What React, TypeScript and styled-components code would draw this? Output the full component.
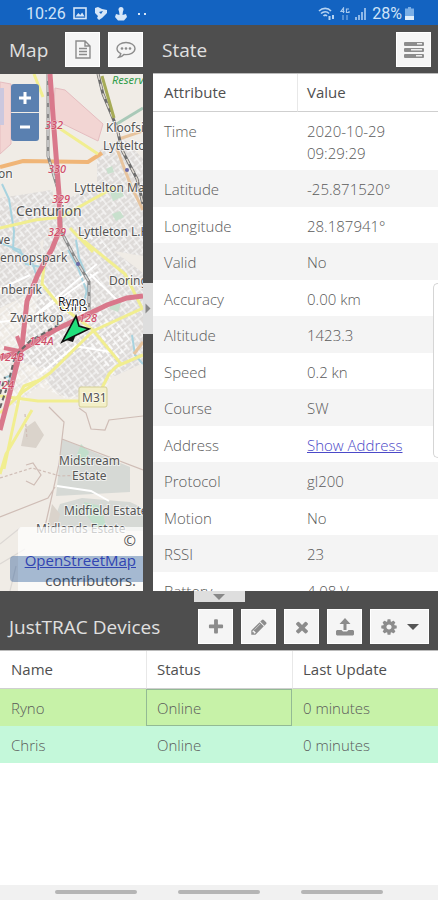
import React from "react";
import styled, { createGlobalStyle } from "styled-components";

const GlobalStyle = createGlobalStyle`
  * { box-sizing: border-box; }
  body { margin: 0; background: #fff; font-family: "Open Sans", "Noto Sans", sans-serif; font-size: 15px; }
`;

const Screen = styled.div`
  position: relative;
  display: flex;
  flex-direction: column;
  height: 100vh;
  overflow: hidden;
`;

const StatusBar = styled.header`
  flex: none;
  display: flex;
  align-items: center;
  justify-content: space-between;
  height: 25px;
  padding: 2px 24px 0 26px;
  background: #1363c1;
  color: #cfe3f8;
  font: 16px/24px Roboto, sans-serif;
`;

const StatusGroup = styled.div<{ $gap: number }>`
  display: flex;
  align-items: center;
  gap: ${(p) => p.$gap}px;
`;

const TopArea = styled.main`
  flex: 566 1 0;
  min-height: 0;
  display: flex;
`;

const Panel = styled.section<{ $grow: number }>`
  flex: ${(p) => p.$grow} 1 0;
  min-width: 0;
  min-height: 0;
  display: flex;
  flex-direction: column;
  overflow: hidden;
`;

const PanelHeader = styled.div<{ $right: number }>`
  flex: none;
  display: flex;
  align-items: center;
  gap: 8px;
  height: 48px;
  padding: 1px ${(p) => p.$right}px 0 9px;
  background: #4e4e4e;
`;

const PanelTitle = styled.h2`
  flex: 1;
  margin: 0;
  color: #e0e0e0;
  font-size: 19px;
  font-weight: 400;
  line-height: 24px;
  white-space: nowrap;
`;

const ToolButton = styled.button<{ $wide?: boolean }>`
  flex: none;
  display: flex;
  align-items: center;
  justify-content: center;
  gap: 9px;
  width: ${(p) => (p.$wide ? 59 : 35)}px;
  height: 35px;
  padding: 0;
  border: 1px solid #fff;
  background: #f5f5f5;
  color: #8c8c8c;
`;

const Splitter = styled.div<{ $horizontal?: boolean }>`
  flex: none;
  display: flex;
  flex-direction: ${(p) => (p.$horizontal ? "row" : "column")};
  justify-content: center;
  ${(p) => (p.$horizontal ? "height: 11px;" : "width: 10px;")}
  background: #4e4e4e;
`;

const Collapser = styled.button<{ $horizontal?: boolean }>`
  display: flex;
  align-items: center;
  justify-content: center;
  width: ${(p) => (p.$horizontal ? "51px" : "10px")};
  height: ${(p) => (p.$horizontal ? "11px" : "51px")};
  padding: 0;
  border: 0;
  background: #dedede;
  color: #888;
`;

const MapBody = styled.div`
  position: relative;
  flex: 1;
  min-height: 0;
  overflow: hidden;
  border-top: 1px solid #4e4e4e;
  background: #efebe5;
`;

const MapCanvas = styled.svg`
  display: block;
  width: 100%;
  height: 100%;
`;

const ZoomControl = styled.div`
  position: absolute;
  top: 10px;
  left: 11px;
  display: grid;
  gap: 1px;
`;

const ZoomButton = styled.button<{ $last?: boolean }>`
  display: flex;
  align-items: center;
  justify-content: center;
  width: 28px;
  height: 28px;
  padding: 0;
  border: 0;
  border-radius: ${(p) => (p.$last ? "0 0 3px 3px" : "3px 3px 0 0")};
  background: #5a80b0;
  color: #fff;
`;

const ScaleLine = styled.div`
  position: absolute;
  left: 10px;
  right: 0;
  bottom: 9px;
  height: 26px;
  border-radius: 4px 0 0 4px;
  background: rgba(0, 60, 136, 0.34);
`;

const Attribution = styled.div`
  position: absolute;
  right: 0;
  bottom: 0;
  width: 125px;
  padding: 3px 7px 1px 0;
  border-radius: 4px 0 0 0;
  background: rgba(255, 255, 255, 0.72);
  color: #555;
  line-height: 20px;
  display: flex;
  flex-direction: column;
  align-items: flex-end;
`;

const Link = styled.a`
  color: #4b49c8;
  text-decoration: underline;
`;

const TableArea = styled.div`
  flex: 1;
  min-height: 0;
  overflow: hidden;
  background: #fff;
  border-top: 1px solid #bbb;
`;

const Table = styled.table`
  width: 100%;
  table-layout: fixed;
  border-collapse: separate;
  border-spacing: 0;
  text-align: left;
  color: #5a5a5a;
  font-size: 15px;
  line-height: 22px;
`;

const HeadCell = styled.th<{ $pad: number; $narrow?: boolean }>`
  width: ${(p) => (p.$narrow ? "144px" : "auto")};
  height: 38px;
  padding: 0 ${(p) => p.$pad}px 1px;
  border-bottom: 1px solid #cfcfcf;
  color: #4f4f4f;
  font-weight: 400;
  & + & { border-left: 1px solid #e8e8e8; }
`;

const AttributeRow = styled.tr`
  height: 36px;
  &:nth-child(even) { height: 37px; background: #f4f4f4; }
`;

const Cell = styled.td<{ $pad: number }>`
  padding: 8px ${(p) => p.$pad}px 6px;
  font-weight: 300;
  vertical-align: top;
`;

const DeviceRow = styled.tr<{ $color: string }>`
  height: 37px;
  background: ${(p) => p.$color};
`;

const DeviceCell = styled.td<{ $focused?: boolean }>`
  padding: 0 10px;
  border: 1px solid ${(p) => (p.$focused ? "#93ba94" : "transparent")};
  font-weight: 300;
`;

const EdgeHandle = styled.div`
  position: absolute;
  top: 283px;
  right: 0;
  width: 5px;
  height: 175px;
  border: 1px solid #d5d5d5;
  border-right: 0;
  border-radius: 5px 0 0 5px;
  background: #fff;
`;

const NavBar = styled.footer`
  flex: none;
  display: flex;
  justify-content: center;
  gap: 41px;
  height: 15px;
  padding-top: 5px;
  background: #f1f1f1;
`;

const NavKey = styled.button`
  width: 82px;
  height: 4px;
  padding: 0;
  border: 0;
  border-radius: 2px;
  background: #b5b5b5;
`;

const glyphs = {
  plus: "M1600 736v192q0 40-28 68t-68 28h-416v416q0 40-28 68t-68 28h-192q-40 0-68-28t-28-68v-416h-416q-40 0-68-28t-28-68v-192q0-40 28-68t68-28h416v-416q0-40 28-68t68-28h192q40 0 68 28t28 68v416h416q40 0 68 28t28 68z",
  pencil:
    "M491 1536l91-91-235-235-91 91v107h128v128h107zm523-928q0-22-22-22-10 0-17 7l-542 542q-7 7-7 17 0 22 22 22 10 0 17-7l542-542q7-7 7-17zm-54-192l416 416-832 832h-416v-416zm683 96q0 53-37 90l-166 166-416-416 166-165q36-38 90-38 53 0 91 38l235 234q37 39 37 91z",
  times:
    "M1490 1322q0 40-28 68l-136 136q-28 28-68 28t-68-28l-294-294-294 294q-28 28-68 28t-68-28l-136-136q-28-28-28-68t28-68l294-294-294-294q-28-28-28-68t28-68l136-136q28-28 68-28t68 28l294 294 294-294q28-28 68-28t68 28l136 136q28 28 28 68t-28 68l-294 294 294 294q28 28 28 68z",
  cog: "M1152 896q0-106-75-181t-181-75-181 75-75 181 75 181 181 75 181-75 75-181zm512-109v222q0 12-8 23t-20 13l-185 28q-19 54-39 91 35 50 107 138 10 12 10 25t-9 23q-27 37-99 108t-94 71q-12 0-26-9l-138-108q-44 23-91 38-16 136-29 186-7 28-36 28h-222q-14 0-24.5-8.5t-11.5-21.5l-28-184q-49-16-90-37l-141 107q-10 9-25 9-14 0-25-11-126-114-165-168-7-10-7-23 0-12 8-23 15-21 51-66.5t54-70.5q-27-50-41-99l-183-27q-13-2-21-12.5t-8-23.5v-222q0-12 8-23t19-13l186-28q14-46 39-92-40-57-107-138-10-12-10-24 0-10 9-23 26-36 98.5-107.5t94.5-71.5q13 0 26 10l138 107q44-23 91-38 16-136 29-186 7-28 36-28h222q14 0 24.5 8.5t11.5 21.5l28 184q49 16 90 37l142-107q9-9 24-9 13 0 25 10 129 119 165 170 7 8 7 22 0 12-8 23-15 21-51 66.5t-54 70.5q26 50 41 98l183 28q13 2 21 12.5t8 23.5z",
};

const Glyph = ({ name }: { name: keyof typeof glyphs }) => (
  <svg width="18" height="18" viewBox="0 0 1792 1792" fill="currentColor" aria-hidden="true">
    <path d={glyphs[name]} />
  </svg>
);

const FileIcon = () => (
  <svg width="20" height="22" viewBox="0 0 20 22" fill="none" stroke="#8c8c8c" strokeWidth="1.4" aria-hidden="true">
    <path d="M3 2h9l5 5v12H3zM12 2v5h5M6 9.500h8M6 12.500h8M6 15.500h8" />
  </svg>
);

const CommentIcon = () => (
  <svg width="22" height="20" viewBox="0 0 22 20" fill="none" stroke="#8c8c8c" strokeWidth="1.4" aria-hidden="true">
    <path d="M11 2.500c-5 0-9 2.600-9 6 0 2.200 1.500 4 3.800 5.100-.3 1.600-1 2.700-2.100 3.700 2.200-.2 3.900-1.200 5.200-2.800 6 .7 11.100-2 11.100-6 0-3.400-4-6-9-6z" />
    <g fill="#8c8c8c" stroke="none">
      <circle cx="7" cy="8.500" r="1.300" />
      <circle cx="11" cy="8.500" r="1.300" />
      <circle cx="15" cy="8.500" r="1.300" />
    </g>
  </svg>
);

const ServerIcon = () => (
  <svg width="20" height="18" viewBox="0 0 20 18" fill="#8c8c8c" aria-hidden="true">
    <rect x="0" y="1" width="20" height="4" rx="1" />
    <rect x="0" y="7" width="20" height="4" rx="1" />
    <rect x="0" y="13" width="20" height="4" rx="1" />
    <g fill="#ececec">
      <rect x="13" y="2" width="5" height="1.500" />
      <rect x="7" y="8" width="11" height="1.500" />
      <rect x="12" y="14" width="6" height="1.500" />
    </g>
  </svg>
);

const UploadIcon = () => (
  <svg width="20" height="20" viewBox="0 0 20 20" fill="currentColor" aria-hidden="true">
    <path d="M10 1l5.500 6h-4v6h-3V7h-4zM2 13h4.500l1.500 1.500h4l1.500-1.500H18l1 1v3.500l-1 1H2l-1-1V14z" />
  </svg>
);

const Triangle = ({ dir, size = 12, color = "currentColor" }: { dir: "down" | "right"; size?: number; color?: string }) => (
  <svg width={size} height={size} viewBox="0 0 12 12" fill={color} aria-hidden="true">
    <path d={dir === "down" ? "M0 3h12L6 9z" : "M3 0v12l6-6z"} />
  </svg>
);

const PictureIcon = () => (
  <svg width="14" height="13" viewBox="0 0 14 13" aria-hidden="true">
    <rect x="1" y="1" width="12" height="10.500" fill="none" stroke="#d6e6f8" strokeWidth="1.600" />
    <path d="M2.500 9.500l2.800-3.500 2 2 1.800-2.500 2.500 4z" fill="#d6e6f8" />
  </svg>
);

const TagIcon = () => (
  <svg width="14" height="14" viewBox="0 0 14 14" fill="#d6e6f8" aria-hidden="true">
    <path d="M1 1l3-1 4 2 5 1v3l-5 5-3 2-2-2 1-2-3-3z" />
    <path d="M5 5l4-1-2 3z" fill="#1363c1" />
  </svg>
);

const PersonIcon = () => (
  <svg width="12" height="14" viewBox="0 0 12 14" fill="#d6e6f8" aria-hidden="true">
    <circle cx="6" cy="2.500" r="2.500" />
    <path d="M4 4h4l-.5 4 3.500-1 1 3-3 3.500H3L0 10l1-3 3.500 1z" />
  </svg>
);

const DotsIcon = () => (
  <svg width="9" height="4" viewBox="0 0 9 4" fill="#d6e6f8" aria-hidden="true">
    <rect x="0" y="1" width="2" height="2" />
    <rect x="6" y="1" width="2" height="2" />
  </svg>
);

const WifiIcon = () => (
  <svg width="17" height="14" viewBox="0 0 17 14" fill="none" stroke="#b6d3f2" strokeWidth="1.600" aria-hidden="true">
    <path d="M1 4c3.500-3.500 9-3.500 12 0M3 6.500c2.500-2.300 6-2.300 8 0M5.500 9c1-1 2.500-1 3.500 0" />
    <path d="M11.500 9v4M15 8v4" strokeWidth="2" />
  </svg>
);

const DataIcon = () => (
  <svg width="10" height="14" viewBox="0 0 10 14" fill="none" stroke="#a5c8ee" aria-hidden="true">
    <path d="M3.500 6V1L1 4.500h3.500M9 2H6.500v3.500H9V4" strokeWidth="1.200" />
    <path d="M3 8v5M7 8v5" strokeWidth="1.500" opacity=".6" />
  </svg>
);

const SignalIcon = () => (
  <svg width="12" height="12" viewBox="0 0 12 12" fill="#8db8e8" aria-hidden="true">
    <path d="M0 9h2v3H0zM3 7h2v5H3zM6 4h2v8H6zM9 0h2v12H9z" />
  </svg>
);

const BatteryIcon = () => (
  <svg width="9" height="13" viewBox="0 0 9 13" aria-hidden="true">
    <path d="M3 0h3v1.500h3V13H0V1.500h3z" fill="#7aaee6" />
    <path d="M0 9h9v4H0z" fill="#e1eefb" />
  </svg>
);

const Place = styled.text<{ $size?: number }>`
  font: 400 ${(p) => p.$size ?? 12}px "Noto Sans", sans-serif;
  fill: #555;
  stroke: rgba(255, 255, 255, 0.6);
  stroke-width: 2px;
  paint-order: stroke;
`;

const RoadRef = styled.text`
  font: italic 500 11px "Noto Sans", sans-serif;
  fill: #cf4d68;
  stroke: rgba(255, 255, 255, 0.5);
  stroke-width: 1px;
  paint-order: stroke;
`;

const MapDrawing = () => (
  <MapCanvas viewBox="0 0 143 517" preserveAspectRatio="xMidYMid slice" role="img" aria-label="Street map">
    <defs>
      <pattern id="streets" width="13" height="11" patternUnits="userSpaceOnUse" patternTransform="rotate(-38)">
        <path d="M0 3h13M4 0v11M0 8h9M10 3v8" stroke="#fff" strokeWidth="1.200" fill="none" />
        <path d="M0 4h13M5 0v11" stroke="#cfcac6" strokeWidth=".5" fill="none" />
      </pattern>
    </defs>
    <rect width="143" height="517" fill="#f0ece6" />
    <g fill="#dfdcda">
      <path d="M97 78l25-15 21 22v97l-35-6-48-27 10-26 27-10z" />
      <path d="M0 124l52-8 8 34-20 18 6 44-46 22z" />
      <path d="M44 164l42-8 57 43v90l-28 13-33-25-36 18-30-8 20-50z" />
      <path d="M58 270l24-22 28 10 20 14-25 38-38 14-20-14z" />
    </g>
    <g fill="url(#streets)">
      <path d="M97 78l25-15 21 22v97l-35-6-48-27 10-26 27-10z" />
      <path d="M0 124l52-8 8 34-20 18 6 44-46 22z" />
      <path d="M44 164l42-8 57 43v90l-28 13-33-25-36 18-30-8 20-50z" />
      <path d="M0 238l30-20 48 2 55 40-26 52-38 14-30-14-24 20-15-8z" />
    </g>
    <path d="M55 14l10 2 38 34-5 17-45-22zM0 8l11 2v60L0 80z" fill="#f2d5d3" stroke="#e5bdc0" />
    <path d="M0 14h4v37H0z" fill="#cbc8df" />
    <path d="M110 118l10-4 4 8-11 5zM106 95l6-3 2 6-6 2zM110 227l11 2-3 9-8-3zM112 140l8-3 4 6-8 4z" fill="#c8e0cd" />
    <path d="M62 365l68 28v25l-74 4zM60 430l22-6 48 4 13 6v23H50z" fill="#d6d9d5" />
    <path d="M81 370l8 8-4 15-10-7zM84 428l17 4 6 24-10-2-11-13zM73 430l10 6-8 8z" fill="#c2dfcc" />
    <path d="M25 354l10-7 9 14-8 13-15-2zM52 430l8 10-4 15h-9z" fill="#dad3cb" />
    <g fill="none" stroke="#a8d3df" strokeWidth="2">
      <path d="M2 110l7 15 5 32-1 18 18 10 6 18M0 169l20 7 6 14 20 4M68 176l10 18 9 24" />
      <path d="M76 166l3 18 10 24-6 24M132 261l3 20 8 9" />
      <path d="M15 291l-3 10-8 3M8 308l3-5" />
    </g>
    <g fill="none" stroke="#cfbdb6" strokeWidth="1.200">
      <path d="M49 333l15 15-5 42-10 45-5 22M62 365l81 31M0 443l48-19 7-11M79 334l7 5 5 16 14 1 4-10 34-4M26 391l7-2 8 12-7 10-8-4" />
      <path d="M0 404l32-10 28 8 45-2M25 340l2 25" strokeDasharray="3 2" />
      <path d="M0 470l20-16M0 490l25-15M10 517l6-25" stroke="#dcd8d4" />
    </g>
    <g fill="none" stroke="#fff" strokeWidth="2">
      <path d="M0 248l32-4 66-46M22 252l75-62M40 300l35-28 36 6M90 200l28 27M57 412l34 5 18 10M0 215l30-14" />
    </g>
    <g fill="none" stroke="#e7c49e" strokeWidth="3">
      <path d="M143 57l-24 8M117 75l14 37 12 24M134 280l9-12" />
    </g>
    <path d="M0 93l23-6 65 1 14-9" fill="none" stroke="#f0b577" strokeWidth="4" />
    <path d="M143 34l-28 17" stroke="#a9c9b8" strokeWidth="3" />
    <path d="M98 0l5 20 14 34 5 22 15 29 6 25" fill="none" stroke="#6d6d6d" strokeWidth="3" />
    <path d="M98 0l5 20 14 34 5 22 15 29 6 25" fill="none" stroke="#ded8cf" strokeWidth="1.500" strokeDasharray="6 4" />
    <path d="M102 2l12 42" stroke="#a6ab57" strokeWidth="3" />
    <path d="M48 0v82l12 40 1 35" fill="none" stroke="#888" strokeWidth="3" />
    <path d="M61 157l14 27 14 24v28" fill="none" stroke="#888" strokeWidth="3" />
    <path d="M48 0v82l12 40 1 35 14 27 14 24v28" fill="none" stroke="#d5d5d5" strokeWidth="1.500" strokeDasharray="7 4" />
    <g fill="none" stroke="#f1ee90" strokeWidth="4">
      <path d="M34 0l9 23M59 54l39 26M0 154l35-8 26-3 54-30M70 154l23 24" strokeWidth="3" />
      <path d="M45 183l-3 27 16 20 35 26 28 34M83 166l42 34 17 34M143 234l-50 23-43 42-26 18-24 22M143 281l-26 11-8 8-10 20" strokeWidth="3" />
      <path d="M0 322l38 5h42M40 306l-16 6-5 9M32 336L6 380l-6 20M20 320L4 395" strokeWidth="3" />
    </g>
    <g fill="none" stroke="#d9788b" strokeWidth="5">
      <path d="M50 0l4 55 5 65 1 35-8 20-14 25-11 27-5 45-6 22-8 32-8 30" />
      <path d="M0 284l18-6 37-22 52-25 20-7 16-2" strokeWidth="5" />
      <path d="M17 262l5 14-9 20M4 274l15 3" strokeWidth="4" />
    </g>
    <path d="M0 334l8-24 7-28 15-15 30-17M0 320l5-17" fill="none" stroke="#666" strokeWidth="2" strokeDasharray="5 3" />
    <circle cx="78" cy="190" r="2" fill="#6b6aa8" />
    <circle cx="127" cy="96" r="2" fill="#6b6aa8" />
    <rect x="79" y="313" width="28" height="20" rx="2" fill="#f3efc7" stroke="#d4cf96" />
    <Place x="82" y="328">M31</Place>
    <Place x="-2" y="104">on</Place>
    <Place x="106" y="58">Kloofsig</Place>
    <Place x="103" y="76">Lyttelton</Place>
    <Place x="74" y="118">Lyttelton Manor</Place>
    <Place x="16" y="142" $size={14}>Centurion</Place>
    <Place x="78" y="162">Lyttleton L.H</Place>
    <Place x="-6" y="170">we</Place>
    <Place x="0" y="188">ennopspark</Place>
    <Place x="1" y="220">nberrik</Place>
    <Place x="109" y="211">Doringkloof</Place>
    <Place x="10" y="248">Zwartkop</Place>
    <Place x="59" y="391">Midstream</Place>
    <Place x="72" y="406">Estate</Place>
    <Place x="64" y="441">Midfield Estate</Place>
    <Place x="36" y="459">Midlands Estate</Place>
    <RoadRef x="45" y="55">332</RoadRef>
    <RoadRef x="48" y="99">330</RoadRef>
    <RoadRef x="52" y="129">329</RoadRef>
    <RoadRef x="48" y="162">329</RoadRef>
    <RoadRef x="79" y="248">128</RoadRef>
    <RoadRef x="29" y="271">124A</RoadRef>
    <RoadRef x="-1" y="287">124B</RoadRef>
    <RoadRef x="-4" y="315">124</RoadRef>
    <text x="112" y="10" fill="#2f9c49" fontFamily="Noto Sans, sans-serif" fontStyle="italic" fontSize="11">Reserve</text>
    <g fontFamily="Open Sans, sans-serif" fontSize="12" fill="#111" stroke="#fff" strokeWidth="2" paintOrder="stroke">
      <text x="59" y="237">Chris</text>
      <text x="58" y="232">Ryno</text>
    </g>
    <path d="M66 266l7 2 3-8z" fill="#111" />
    <path d="M76 242l3 10 10 3-27 13z" fill="#21e07c" stroke="#111" strokeWidth="1.600" strokeLinejoin="miter" />
  </MapCanvas>
);

const attributes: [string, string][] = [
  ["Time", "2020-10-29 09:29:29"],
  ["Latitude", "-25.871520°"],
  ["Longitude", "28.187941°"],
  ["Valid", "No"],
  ["Accuracy", "0.00 km"],
  ["Altitude", "1423.3"],
  ["Speed", "0.2 kn"],
  ["Course", "SW"],
  ["Address", "Show Address"],
  ["Protocol", "gl200"],
  ["Motion", "No"],
  ["RSSI", "23"],
  ["Battery", "4.08 V"],
];

const devices = [
  { name: "Ryno", status: "Online", updated: "0 minutes", color: "#c7f2a8", focused: true },
  { name: "Chris", status: "Online", updated: "0 minutes", color: "#c4f8da", focused: false },
];

export default function App() {
  return (
    <>
      <GlobalStyle />
      <Screen>
        <StatusBar>
          <StatusGroup $gap={7}>
            <span>10:26</span>
            <PictureIcon />
            <TagIcon />
            <PersonIcon />
            <StatusGroup $gap={0}>
              &nbsp;
              <DotsIcon />
            </StatusGroup>
          </StatusGroup>
          <StatusGroup $gap={5}>
            <WifiIcon />
            <DataIcon />
            <SignalIcon />
            <StatusGroup $gap={3}>
              <span>28%</span>
              <BatteryIcon />
            </StatusGroup>
          </StatusGroup>
        </StatusBar>

        <TopArea>
          <Panel $grow={143}>
            <PanelHeader $right={0}>
              <PanelTitle>Map</PanelTitle>
              <ToolButton aria-label="Reports"><FileIcon /></ToolButton>
              <ToolButton aria-label="Events"><CommentIcon /></ToolButton>
            </PanelHeader>
            <MapBody>
              <MapDrawing />
              <ZoomControl>
                <ZoomButton aria-label="Zoom in">
                  <svg width="12" height="12" viewBox="0 0 12 12" stroke="#fff" strokeWidth="3"><path d="M6 0v12M0 6h12" /></svg>
                </ZoomButton>
                <ZoomButton $last aria-label="Zoom out">
                  <svg width="12" height="12" viewBox="0 0 12 12" stroke="#fff" strokeWidth="3"><path d="M1 6h10" /></svg>
                </ZoomButton>
              </ZoomControl>
              <Attribution>
                <span>©</span>
                <Link href="#osm">OpenStreetMap</Link>
                <span>contributors.</span>
              </Attribution>
              <ScaleLine />
            </MapBody>
          </Panel>
          <Splitter>
            <Collapser aria-label="Collapse map"><Triangle dir="right" size={11} /></Collapser>
          </Splitter>
          <Panel $grow={285}>
            <PanelHeader $right={7}>
              <PanelTitle>State</PanelTitle>
              <ToolButton aria-label="Computed attributes"><ServerIcon /></ToolButton>
            </PanelHeader>
            <TableArea>
              <Table>
                <thead>
                  <tr>
                    <HeadCell $pad={11} $narrow>Attribute</HeadCell>
                    <HeadCell $pad={9}>Value</HeadCell>
                  </tr>
                </thead>
                <tbody>
                  {attributes.map(([name, value]) => (
                    <AttributeRow key={name}>
                      <Cell $pad={11}>{name}</Cell>
                      <Cell $pad={10}>{name === "Address" ? <Link href="#address">{value}</Link> : value.split(" ").length > 1 && name === "Time" ? <>{value.split(" ")[0]}<br />{value.split(" ")[1]}</> : value}</Cell>
                    </AttributeRow>
                  ))}
                </tbody>
              </Table>
            </TableArea>
          </Panel>
        </TopArea>

        <Splitter $horizontal>
          <Collapser $horizontal aria-label="Collapse devices"><Triangle dir="down" size={12} /></Collapser>
        </Splitter>
        <Panel $grow={283}>
          <PanelHeader $right={9}>
            <PanelTitle>JustTRAC Devices</PanelTitle>
            <ToolButton aria-label="Add"><Glyph name="plus" /></ToolButton>
            <ToolButton aria-label="Edit"><Glyph name="pencil" /></ToolButton>
            <ToolButton aria-label="Remove"><Glyph name="times" /></ToolButton>
            <ToolButton aria-label="Send command"><UploadIcon /></ToolButton>
            <ToolButton $wide aria-label="Settings">
              <Glyph name="cog" />
              <Triangle dir="down" color="#555" />
            </ToolButton>
          </PanelHeader>
          <TableArea>
            <Table>
              <thead>
                <tr>
                  <HeadCell $pad={11}>Name</HeadCell>
                  <HeadCell $pad={10}>Status</HeadCell>
                  <HeadCell $pad={10}>Last Update</HeadCell>
                </tr>
              </thead>
              <tbody>
                {devices.map((d) => (
                  <DeviceRow key={d.name} $color={d.color}>
                    <DeviceCell>{d.name}</DeviceCell>
                    <DeviceCell $focused={d.focused}>{d.status}</DeviceCell>
                    <DeviceCell>{d.updated}</DeviceCell>
                  </DeviceRow>
                ))}
              </tbody>
            </Table>
          </TableArea>
        </Panel>

        <NavBar>
          <NavKey aria-label="Recent apps" />
          <NavKey aria-label="Home" />
          <NavKey aria-label="Back" />
        </NavBar>
        <EdgeHandle />
      </Screen>
    </>
  );
}
